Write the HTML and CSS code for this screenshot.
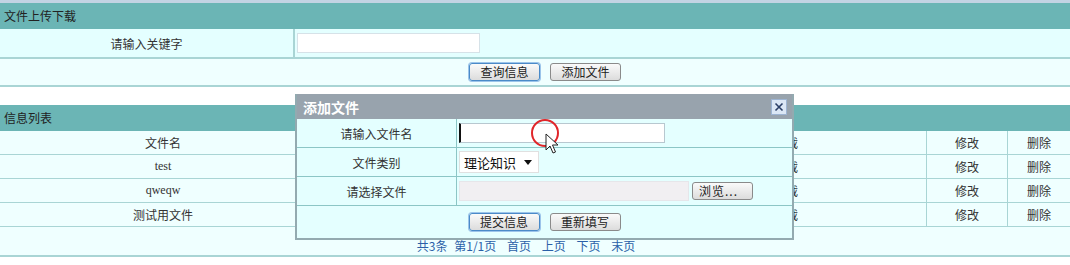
FILE: index.html
```html
<!DOCTYPE html>
<html>
<head>
  <title>文件上传下载</title>
  <link rel="stylesheet" href="styles.css">
</head>
<body>
  <div class="topline"></div>
  <div class="panel">
    <div class="panel-title">文件上传下载</div>
    <div class="search-row">
      <div class="search-label">请输入关键字</div>
      <div class="search-field"><input type="text" class="keyword"></div>
    </div>
    <div class="action-row">
      <button class="btn focus">查询信息</button>
      <button class="btn">添加文件</button>
    </div>
  </div>

  <div class="panel list">
    <div class="panel-title">信息列表</div>
    <table class="grid">
      <tr>
        <td class="c-name">文件名</td><td class="c-type"></td><td class="c-down">下载</td><td class="c-edit">修改</td><td class="c-del">删除</td>
      </tr>
      <tr>
        <td class="latin">test</td><td></td><td>下载</td><td>修改</td><td>删除</td>
      </tr>
      <tr>
        <td class="latin">qweqw</td><td></td><td>下载</td><td>修改</td><td>删除</td>
      </tr>
      <tr>
        <td>测试用文件</td><td></td><td>下载</td><td>修改</td><td>删除</td>
      </tr>
    </table>
    <div class="pager">
      <span>共3条</span> <span>第1/1页</span>
      <a>首页</a> <a>上页</a> <a>下页</a> <a>末页</a>
    </div>
  </div>

  <div class="dialog">
    <div class="dialog-title">
      <span>添加文件</span>
      <span class="close">
        <svg width="10" height="10" viewBox="0 0 10 10"><path d="M1.5 1.5 L8.5 8.5 M8.5 1.5 L1.5 8.5" stroke="#2b3f66" stroke-width="1.6"/></svg>
      </span>
    </div>
    <div class="form-row">
      <div class="form-label">请输入文件名</div>
      <div class="form-field"><input type="text" class="fname"></div>
    </div>
    <div class="form-row">
      <div class="form-label">文件类别</div>
      <div class="form-field">
        <div class="select">理论知识 <span class="caret"></span></div>
      </div>
    </div>
    <div class="form-row">
      <div class="form-label">请选择文件</div>
      <div class="form-field">
        <div class="filebox"></div>
        <button class="btn browse">浏览...</button>
      </div>
    </div>
    <div class="form-actions">
      <button class="btn focus">提交信息</button>
      <button class="btn">重新填写</button>
    </div>
  </div>

  <svg class="pointer" width="34" height="40" viewBox="0 0 34 40">
    <circle cx="14" cy="14" r="13" fill="none" stroke="#e0262a" stroke-width="2"/>
    <path d="M15 15 L15 31 L19 27 L22 34 L24.5 33 L21.5 26 L27 26 Z" fill="#fff" stroke="#222" stroke-width="1"/>
  </svg>
</body>
</html>
```

FILE: styles.css
```css
body {
  margin: 0;
  width: 1070px;
  height: 265px;
  overflow: hidden;
  background: #fff;
  font-family: "Noto Sans CJK SC", "Liberation Sans", sans-serif;
  font-size: 12px;
  color: #333;
  position: relative;
}
.topline {
  height: 3px;
  background: #c3d3e3;
}
.panel-title {
  height: 26px;
  line-height: 26px;
  padding-left: 4px;
  background: #6bb5b5;
  color: #222;
  font-size: 12px;
}
.search-row {
  display: flex;
  height: 28px;
  background: #e4ffff;
  border-bottom: 2px solid #a9d5d5;
}
.search-label {
  width: 293px;
  border-right: 2px solid #a9d5d5;
  display: flex;
  align-items: center;
  justify-content: center;
}
.search-field {
  flex: 1;
  display: flex;
  align-items: center;
  padding-left: 2px;
}
.keyword {
  width: 181px;
  height: 18px;
  border: 1px solid #d6e2e8;
  background: #fff;
  padding: 0;
}
.action-row {
  height: 26px;
  background: #efffff;
  border-bottom: 2px solid #a9d5d5;
  display: flex;
  align-items: center;
  justify-content: center;
  gap: 10px;
  padding-left: 20px;
}
.btn {
  height: 18px;
  width: 71px;
  padding: 0;
  font-family: "Noto Sans CJK SC", sans-serif;
  font-size: 12px;
  line-height: 16px;
  color: #222;
  background: linear-gradient(#fafafa, #dcdcdc);
  border: 1px solid #8a8a8a;
  border-radius: 3px;
}
.btn.focus {
  border-color: #4a8ac8;
  box-shadow: 0 0 0 1px #9cc4ea;
}
.list {
  margin-top: 18px;
}
.grid {
  width: 100%;
  border-collapse: collapse;
  background: #efffff;
  table-layout: fixed;
}
.grid td {
  height: 23px;
  padding: 0;
  text-align: center;
  border: 1px solid #a9d5d5;
  border-top: none;
  color: #333;
}
.grid td:first-child { border-left: none; }
.grid td:last-child { border-right: none; }
.c-name { width: 326px; }
.c-type { width: 318px; }
.c-down { width: 280px; }
.c-edit { width: 80px; }
.latin {
  font-family: "Liberation Serif", "Noto Sans CJK SC", serif;
  font-size: 12px;
}
.pager {
  height: 28px;
  line-height: 38px;
  background: #efffff;
  border-bottom: 2px solid #a9d5d5;
  text-align: center;
  padding-right: 18px;
  color: #2b5fa8;
  word-spacing: 4px;
}
.pager a {
  color: #2b5fa8;
  margin-left: 4px;
}
.dialog {
  position: absolute;
  left: 295px;
  top: 94px;
  width: 495px;
  background: #e4ffff;
  border: 2px solid #93aab0;
  border-top: none;
}
.dialog-title {
  height: 25px;
  background: #98a3ad;
  display: flex;
  align-items: center;
  justify-content: space-between;
  padding: 0 5px 0 6px;
  color: #fff;
  font-weight: bold;
  font-size: 14px;
}
.close {
  width: 14px;
  height: 14px;
  background: #dbe7f5;
  border: 1px solid #9db4d2;
  display: flex;
  align-items: center;
  justify-content: center;
}
.form-row {
  display: flex;
  height: 28px;
  border-bottom: 1px solid #8cc6c6;
}
.form-label {
  width: 159px;
  border-right: 1px solid #8cc6c6;
  display: flex;
  align-items: center;
  justify-content: center;
}
.form-field {
  flex: 1;
  display: flex;
  align-items: center;
  padding-left: 2px;
  gap: 3px;
}
.fname {
  width: 200px;
  height: 18px;
  padding: 0 0 0 3px;
  border: 1px solid #b8c8d0;
  background: #fff;
  border-left: 2px solid #111;
}
.select {
  width: 74px;
  height: 20px;
  padding-left: 4px;
  background: #fff;
  border: 1px solid #e0e0e0;
  display: flex;
  align-items: center;
  gap: 8px;
  font-size: 13px;
  color: #111;
}
.caret {
  width: 0;
  height: 0;
  border-left: 4px solid transparent;
  border-right: 4px solid transparent;
  border-top: 5px solid #111;
}
.filebox {
  width: 228px;
  height: 18px;
  background: #f1eff2;
  border: 1px solid #e6e6ea;
}
.browse {
  width: 61px;
  text-align: left;
  padding-left: 6px;
  letter-spacing: 1px;
}
.form-actions {
  height: 32px;
  display: flex;
  align-items: center;
  justify-content: center;
  gap: 10px;
}
.pointer {
  position: absolute;
  left: 531px;
  top: 119px;
}
```
